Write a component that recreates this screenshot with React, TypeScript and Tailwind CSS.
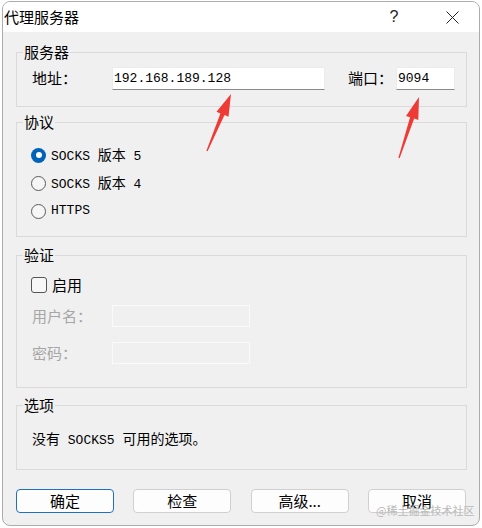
import React from "react";

function arrowPoints(tx: number, ty: number, px: number, py: number) {
  const dx = px - tx;
  const dy = py - ty;
  const len = Math.sqrt(dx * dx + dy * dy);
  const ux = dx / len;
  const uy = dy / len;
  const nx = -uy;
  const ny = ux;
  const headLen = 22;
  const bx = px - ux * headLen;
  const by = py - uy * headLen;
  const pts: [number, number][] = [
    [tx + nx * 0.6, ty + ny * 0.6],
    [bx + nx * 2.2, by + ny * 2.2],
    [bx + nx * 6.5, by + ny * 6.5],
    [px, py],
    [bx - nx * 6.5, by - ny * 6.5],
    [bx - nx * 2.2, by - ny * 2.2],
    [tx - nx * 0.6, ty - ny * 0.6],
  ];
  return pts.map((p) => `${p[0].toFixed(1)},${p[1].toFixed(1)}`).join(" ");
}

const sans = "font-[family-name:'Noto_Sans_CJK_SC',sans-serif]";
const mono = "font-[family-name:'Liberation_Mono','Noto_Sans_CJK_SC',monospace]";

function Radio({ checked, children }: { checked?: boolean; children: React.ReactNode }) {
  return (
    <div className="flex items-center h-[28px] ml-[8px]">
      {checked ? (
        <div className="w-[15px] h-[15px] rounded-full bg-[#0063b8] flex items-center justify-center">
          <div className="w-[6px] h-[6px] rounded-full bg-white" />
        </div>
      ) : (
        <div className="w-[15px] h-[15px] rounded-full border border-[#5c5c5c] bg-[#f6f6f6]" />
      )}
      <div className={`ml-[5px] text-[13px] text-black whitespace-pre ${mono}`}>{children}</div>
    </div>
  );
}

function Legend({ children }: { children: React.ReactNode }) {
  return <legend className="px-[1px] leading-[20px] text-[15px] text-black">{children}</legend>;
}

export default function App() {
  return (
    <div className={`relative w-[482px] h-[528px] bg-white overflow-hidden ${sans}`}>
      <div className="ml-[2px] mt-[1px] w-[478px] h-[525px] border border-[#acacac] rounded-[8px] bg-[#f0f0f0] overflow-hidden flex flex-col">
        {/* title bar */}
        <div className="h-[30px] bg-white flex items-center">
          <div className="pl-[1px] text-[15px] text-black leading-[20px]">代理服务器</div>
          <div className="ml-auto flex items-center gap-[12px] pr-[4px]">
            <div className="w-[46px] h-[30px] flex items-center justify-center text-[16px] text-[#222] font-[family-name:'Liberation_Sans',sans-serif]">?</div>
            <div className="w-[46px] h-[30px] flex items-center justify-center">
              <svg width="13" height="13" viewBox="0 0 13 13">
                <path d="M0.5 0.5 L12.5 12.5 M12.5 0.5 L0.5 12.5" stroke="#222" strokeWidth="1" fill="none" />
              </svg>
            </div>
          </div>
        </div>

        <div className="pl-[13px] flex flex-col">
          {/* 服务器 */}
          <fieldset className="mt-[10px] w-[451px] border border-[#dadada] px-[6px] pt-[5px] pb-[16px]">
            <Legend>服务器</Legend>
            <div className="flex items-center h-[23px] ml-[9px]">
              <div className="w-[80px] text-[15px] text-black">地址：</div>
              <div className={`w-[213px] h-[23px] bg-white border border-[#ebebeb] border-b-[#8a8a8a] flex items-center pl-[1px] text-[13px] text-black ${mono}`}>
                192.168.189.128
              </div>
              <div className="ml-[23px] w-[48px] text-[15px] text-black">端口：</div>
              <div className={`w-[59px] h-[23px] bg-white border border-[#ebebeb] border-b-[#8a8a8a] flex items-center pl-[1px] text-[13px] text-black ${mono}`}>
                9094
              </div>
            </div>
          </fieldset>

          {/* 协议 */}
          <fieldset className="mt-[5px] w-[451px] border border-[#dadada] px-[6px] pt-[9px] pb-[11px]">
            <Legend>协议</Legend>
            <Radio checked>
              {"SOCKS "}
              <span className={`text-[14px] ${sans}`}>版本</span>
              {" 5"}
            </Radio>
            <Radio>
              {"SOCKS "}
              <span className={`text-[14px] ${sans}`}>版本</span>
              {" 4"}
            </Radio>
            <Radio>HTTPS</Radio>
          </fieldset>

          {/* 验证 */}
          <fieldset className="mt-[8px] w-[451px] border border-[#dadada] px-[6px] pt-[6px] pb-[23px]">
            <Legend>验证</Legend>
            <div className="flex items-center h-[28px] ml-[8px]">
              <div className="w-[16px] h-[16px] rounded-[3px] border border-[#555] bg-[#f7f7f7]" />
              <div className="ml-[5px] text-[15px] text-black">启用</div>
            </div>
            <div className="mt-[6px] flex items-center h-[22px] ml-[9px]">
              <div className="w-[80px] text-[15px] text-[#a6a6a6]">用户名：</div>
              <div className="w-[138px] h-[22px] border border-[#fafafa] bg-[#f0f0f0]" />
            </div>
            <div className="mt-[15px] flex items-center h-[22px] ml-[9px]">
              <div className="w-[80px] text-[15px] text-[#a6a6a6]">密码：</div>
              <div className="w-[138px] h-[22px] border border-[#fafafa] bg-[#f0f0f0]" />
            </div>
          </fieldset>

          {/* 选项 */}
          <fieldset className="mt-[7px] w-[451px] border border-[#dadada] px-[6px] pt-[13px] pb-[21px]">
            <Legend>选项</Legend>
            <div className={`ml-[9px] h-[20px] leading-[20px] text-[13px] text-black whitespace-pre ${mono}`}>
              <span className={`text-[14px] ${sans}`}>没有</span>
              {" SOCKS5 "}
              <span className={`text-[14px] ${sans}`}>可用的选项。</span>
            </div>
          </fieldset>

          {/* buttons */}
          <div className="mt-[19px] w-[450px] flex justify-between">
            <div className="w-[98px] h-[24px] rounded-[4px] border border-[#1f6fc2] bg-[#fdfdfd] flex items-center justify-center text-[15px] text-black">确定</div>
            <div className="w-[98px] h-[24px] rounded-[4px] border border-[#d0d0d0] bg-[#fdfdfd] flex items-center justify-center text-[15px] text-black">检查</div>
            <div className="w-[98px] h-[24px] rounded-[4px] border border-[#d0d0d0] bg-[#fdfdfd] flex items-center justify-center text-[15px] text-black">高级...</div>
            <div className="w-[98px] h-[24px] rounded-[4px] border border-[#d0d0d0] bg-[#fdfdfd] flex items-center justify-center text-[15px] text-black">取消</div>
          </div>
        </div>
      </div>

      {/* annotation arrows */}
      <svg className="absolute left-0 top-0 pointer-events-none" width="482" height="528" viewBox="0 0 482 528">
        <polygon points={arrowPoints(207, 151, 231, 94)} fill="#ef3b36" />
        <polygon points={arrowPoints(399, 158, 419, 97)} fill="#ef3b36" />
      </svg>

      {/* watermark */}
      <div className="absolute left-[376px] top-[503px] text-[11px] leading-[14px] text-[#b9b9b9] pointer-events-none">
        @稀土掘金技术社区
      </div>
    </div>
  );
}
